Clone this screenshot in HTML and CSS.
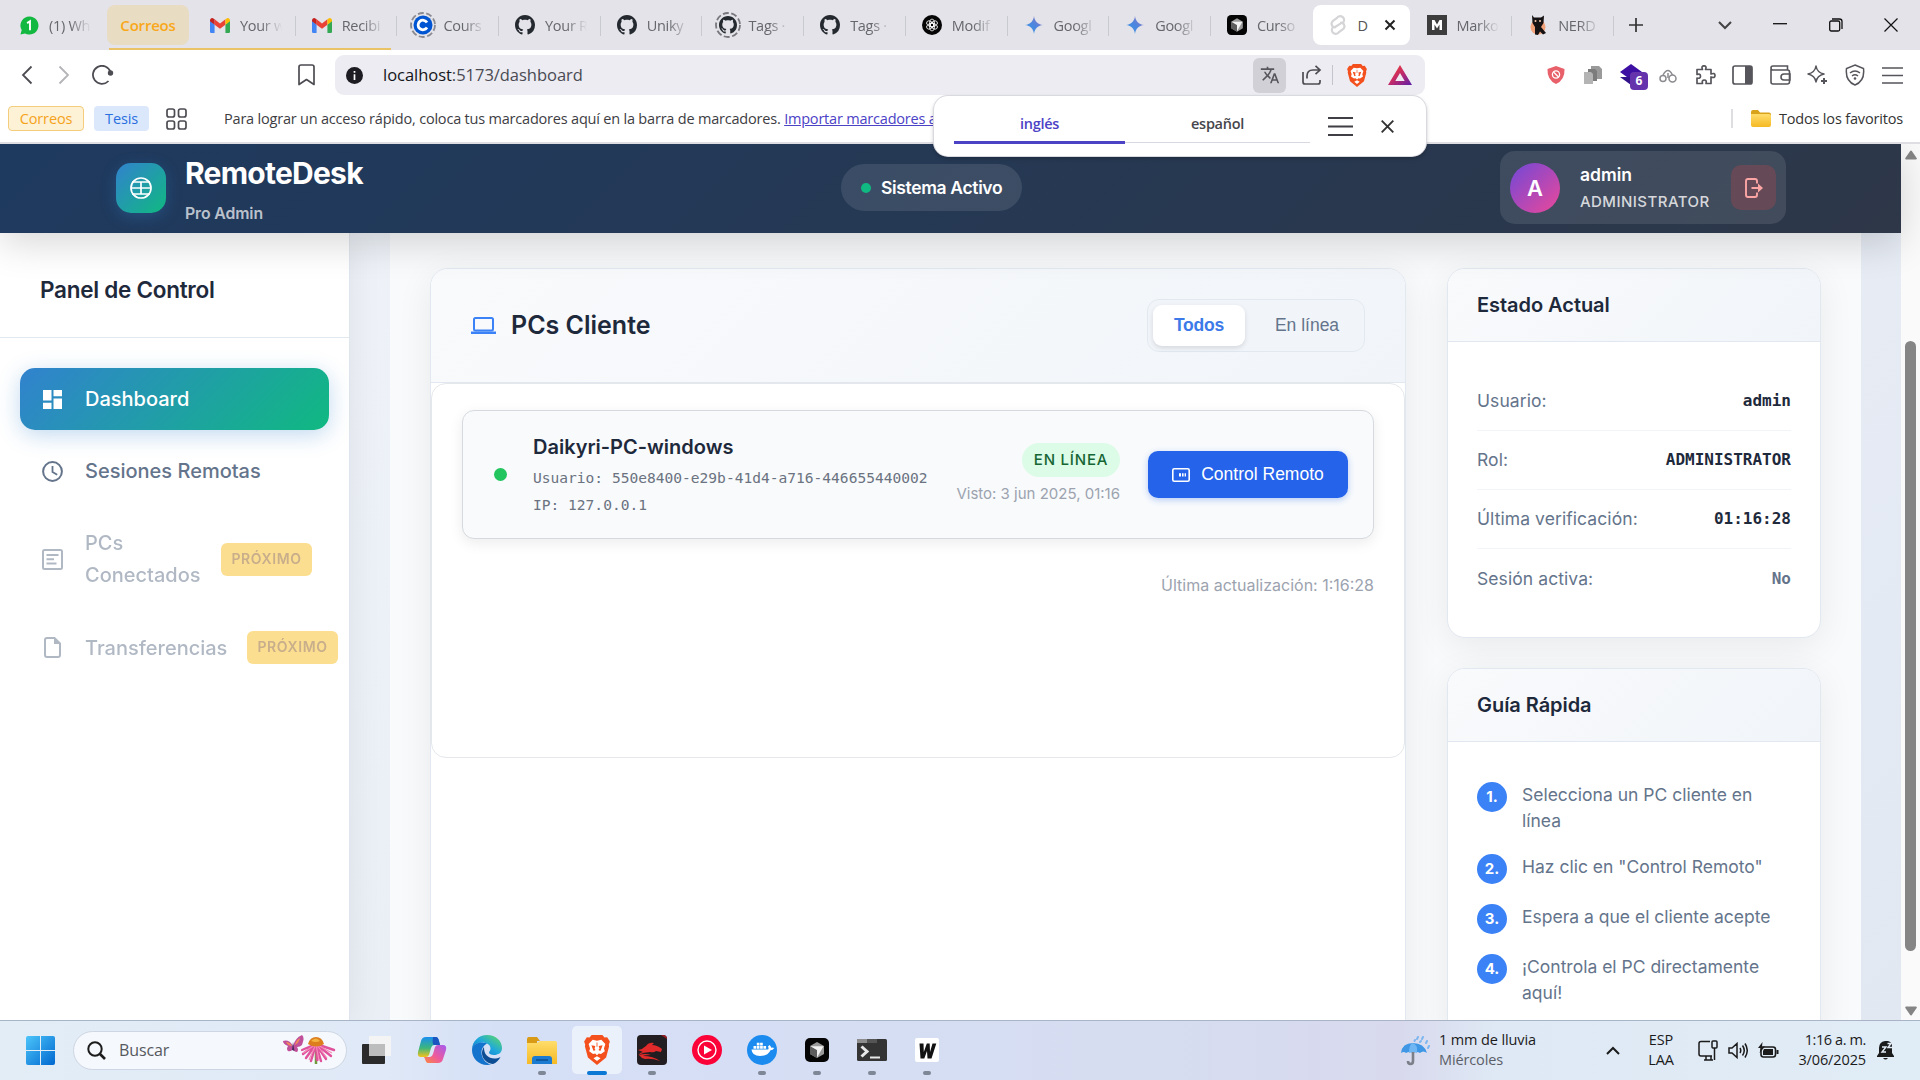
FILE: index.html
```html
<!DOCTYPE html>
<html lang="es">
<head>
<meta charset="utf-8">
<title>RemoteDesk Pro Admin</title>
<link rel="stylesheet" href="styles.css">
</head>
<body>
<svg class="defs" width="0" height="0">
  <defs>
    <linearGradient id="g-tri" x1="0" y1="0" x2="1" y2="1"><stop offset="0" stop-color="#ff4724"/><stop offset=".5" stop-color="#c22a6a"/><stop offset="1" stop-color="#5b1fa8"/></linearGradient>
    <linearGradient id="g-gem" x1="0" y1="1" x2="1" y2="0"><stop offset="0" stop-color="#3b9be0"/><stop offset=".5" stop-color="#4b86e0"/><stop offset="1" stop-color="#a273b8"/></linearGradient>
    <linearGradient id="g-win" x1="0" y1="0" x2="1" y2="1"><stop offset="0" stop-color="#4cc5fa"/><stop offset="1" stop-color="#0067cf"/></linearGradient>
    <linearGradient id="g-folder" x1="0" y1="0" x2="0" y2="1"><stop offset="0" stop-color="#ffdd6b"/><stop offset="1" stop-color="#f5b924"/></linearGradient>
    <linearGradient id="g-edge" x1="0" y1="1" x2="1" y2="0"><stop offset="0" stop-color="#0f6cc4"/><stop offset=".5" stop-color="#1fa7dd"/><stop offset="1" stop-color="#63de5b"/></linearGradient>
    <linearGradient id="g-cop1" x1="0" y1="0" x2="0" y2="1"><stop offset="0" stop-color="#1a8ff0"/><stop offset=".55" stop-color="#3cb67c"/><stop offset="1" stop-color="#f3c21b"/></linearGradient>
    <linearGradient id="g-cop2" x1="1" y1="0" x2="0" y2="1"><stop offset="0" stop-color="#a45bf0"/><stop offset=".55" stop-color="#ee5a9b"/><stop offset="1" stop-color="#fb8a3c"/></linearGradient>
    <symbol id="github" viewBox="0 0 16 16"><path fill="#24292f" d="M8 0C3.58 0 0 3.58 0 8c0 3.54 2.29 6.53 5.47 7.59.4.07.55-.17.55-.38 0-.19-.01-.82-.01-1.49-2.01.37-2.53-.49-2.69-.94-.09-.23-.48-.94-.82-1.13-.28-.15-.68-.52-.01-.53.63-.01 1.08.58 1.23.82.72 1.21 1.87.87 2.33.66.07-.52.28-.87.51-1.07-1.78-.2-3.64-.89-3.64-3.95 0-.87.31-1.59.82-2.15-.08-.2-.36-1.02.08-2.12 0 0 .67-.21 2.2.82.64-.18 1.32-.27 2-.27s1.36.09 2 .27c1.53-1.04 2.2-.82 2.2-.82.44 1.1.16 1.92.08 2.12.51.56.82 1.27.82 2.15 0 3.07-1.87 3.75-3.65 3.95.29.25.54.73.54 1.48 0 1.07-.01 1.93-.01 2.2 0 .21.15.46.55.38A8.01 8.01 0 0 0 16 8c0-4.42-3.58-8-8-8z"/></symbol>
    <symbol id="gmail" viewBox="0 0 24 18"><path fill="#4285f4" d="M0 3v13.500Q0 18 1.500 18H5.500V8z"/><path fill="#34a853" d="M24 3v13.500Q24 18 22.500 18H18.500V8z"/><path fill="#ea4335" d="M5.500 8V1.500L12 6.500 18.500 1.500V8L12 13z"/><path fill="#c5221f" d="M0 3C0 .5 2.500-.8 4.500.8L5.500 1.500V8L0 4z"/><path fill="#fbbc04" d="M24 3C24 .5 21.500-.8 19.500.8L18.500 1.500V8L24 4z"/></symbol>
    <symbol id="gem" viewBox="0 0 20 20"><path fill="url(#g-gem)" d="M10 0C10.800 6 14 9.200 20 10 14 10.800 10.800 14 10 20 9.200 14 6 10.800 0 10 6 9.200 9.200 6 10 0z"/></symbol>
    <symbol id="brave" viewBox="0 0 24 28"><path fill="#f4501e" d="M7 0h10l2 2.400 2.500-.4L24 6l-1 3 .3 1.500L20.500 21 12 28 3.500 21 .7 10.500 1 9 0 6l2.500-4 2.500.4z"/><path fill="#fff" d="M8 4.500l4 .8 4-.8 3.800 4-1.300 4 .8 2.700-3.600 2.600-2-.5-1.700 1.700-1.700-1.700-2 .5-3.600-2.600.8-2.700-1.300-4zM12 19.800l3.300 1.900L12 24.200 8.700 21.700z"/><path fill="#f4501e" d="M6.800 9.500l3.600.7-.7 2.300.9 1.500-1.700.9-1-2.300zM17.200 9.500l-3.600.7.7 2.300-.9 1.500 1.700.9 1-2.300zM11.600 7h.8v4h-.8z"/></symbol>
    <symbol id="cursor" viewBox="0 0 24 24"><rect width="24" height="24" rx="5" fill="#050505"/><path fill="#9a9a9a" d="M12 4l7 4v8l-7 4-7-4V8z"/><path fill="#5d5d5d" d="M12 12v8l-7-4V8z"/><path fill="#f2f2f2" d="M5.500 8.200h13L12 19.500V12z"/></symbol>
  </defs>
</svg>

<div class="screen">
<div class="tabstrip">
  <div class="tab tab-pinned"><svg width="19" height="19" viewBox="0 0 20 20"><path fill="#12b83f" d="M10 .5a9.500 9.500 0 1 1-4.700 17.800L.5 19.500l1.300-4.700A9.500 9.500 0 0 1 10 .5z"/><path fill="none" stroke="#fff" stroke-width="2" d="M7.500 7.500L10.500 5.500V15"/></svg><span class="tab-text">(1) Wh</span></div>
  <div class="tab-group">Correos</div>
  <div class="grouped">
    <div class="tab"><svg width="20" height="15"><use href="#gmail"/></svg><span class="tab-text">Your w</span></div>
    <div class="tab"><svg width="20" height="15"><use href="#gmail"/></svg><span class="tab-text">Recibi</span></div>
  </div>
  <div class="tab tab-ring"><svg width="26" height="26" viewBox="0 0 26 26"><circle cx="13" cy="13" r="12" fill="none" stroke="#8a8a90" stroke-width="1.800" stroke-dasharray="6 2.500"/><circle cx="13" cy="13" r="9.500" fill="#0056d2"/><path fill="none" stroke="#fff" stroke-width="2.800" d="M17 10.500a4.800 4.800 0 1 0 0 5"/></svg><span class="tab-text">Cours</span></div>
  <div class="tab"><svg width="20" height="20"><use href="#github"/></svg><span class="tab-text">Your R</span></div>
  <div class="tab"><svg width="20" height="20"><use href="#github"/></svg><span class="tab-text">Uniky</span></div>
  <div class="tab tab-ring"><svg width="26" height="26" viewBox="0 0 26 26"><circle cx="13" cy="13" r="12" fill="none" stroke="#77777d" stroke-width="1.800" stroke-dasharray="6 2.500"/><use href="#github" x="4" y="4" width="18" height="18"/></svg><span class="tab-text">Tags ·</span></div>
  <div class="tab"><svg width="20" height="20"><use href="#github"/></svg><span class="tab-text">Tags ·</span></div>
  <div class="tab"><svg width="20" height="20" viewBox="0 0 20 20"><circle cx="10" cy="10" r="10" fill="#050505"/><g fill="none" stroke="#fff" stroke-width=".8"><ellipse cx="10" cy="8" rx="2.500" ry="4"/><ellipse cx="10" cy="8" rx="2.500" ry="4" transform="rotate(60 10 10)"/><ellipse cx="10" cy="8" rx="2.500" ry="4" transform="rotate(120 10 10)"/><ellipse cx="10" cy="8" rx="2.500" ry="4" transform="rotate(180 10 10)"/><ellipse cx="10" cy="8" rx="2.500" ry="4" transform="rotate(240 10 10)"/><ellipse cx="10" cy="8" rx="2.500" ry="4" transform="rotate(300 10 10)"/></g></svg><span class="tab-text">Modif</span></div>
  <div class="tab"><svg width="20" height="18"><use href="#gem"/></svg><span class="tab-text">Googl</span></div>
  <div class="tab"><svg width="20" height="18"><use href="#gem"/></svg><span class="tab-text">Googl</span></div>
  <div class="tab tab-last"><svg width="20" height="20"><use href="#cursor"/></svg><span class="tab-text">Curso</span></div>
  <div class="tab tab-active"><svg width="18" height="20" viewBox="0 0 18 20"><path fill="none" stroke="#d5d5d8" stroke-width="2.200" stroke-linecap="round" d="M6.500 11.800l5-3.200M14.500 7a3.800 3.800 0 0 0-6.500-4L4 5.800a3.700 3.700 0 0 0 2 6.600M3.500 13a3.800 3.800 0 0 0 6.500 4l4-2.800a3.700 3.700 0 0 0-2-6.600"/></svg><span class="tab-letter">D</span><svg width="12" height="12" viewBox="0 0 12 12"><path stroke="#222" stroke-width="2" d="M1.500 1.500l9 9M10.500 1.500l-9 9"/></svg></div>
  <div class="tab"><svg width="20" height="20" viewBox="0 0 20 20"><rect width="20" height="20" fill="#3d3d3d"/><path fill="#fff" d="M5 15V5h2.500L10 9.500 12.500 5H15v10h-2.500V9.500L10 13.500 7.500 9.500V15z"/></svg><span class="tab-text">Marko</span></div>
  <div class="tab"><svg width="20" height="20" viewBox="0 0 20 20"><circle cx="10" cy="12" r="7.500" fill="#f3a27a"/><path fill="#161214" d="M4 0l2 2.500h7L16 .5 15.500 8 13 12l5 6-3 1.500-3-3-2 3.500-3-.5V12L4.500 8z"/><circle cx="7.500" cy="6" r="1" fill="#f7c9b0"/><circle cx="12" cy="6" r="1" fill="#f7c9b0"/></svg><span class="tab-text">NERD</span></div>
  <svg class="newtab" width="14" height="14" viewBox="0 0 14 14"><path stroke="#333" stroke-width="1.700" d="M7 0v14M0 7h14"/></svg>
  <div class="window-buttons">
    <svg width="14" height="9" viewBox="0 0 14 9"><path fill="none" stroke="#444" stroke-width="2" d="M1 1l6 6 6-6"/></svg>
    <svg width="14" height="14" viewBox="0 0 14 14"><path stroke="#111" stroke-width="1.300" d="M0 5.700h14"/></svg>
    <svg width="14" height="14" viewBox="0 0 14 14"><g fill="none" stroke="#111" stroke-width="1.300"><rect x=".7" y="3" width="10" height="10" rx="1.500"/><path d="M3 1h7.500q2.500 0 2.500 2.500V11"/></g></svg>
    <svg width="14" height="14" viewBox="0 0 14 14"><path stroke="#111" stroke-width="1.200" d="M.5.500l13 13M13.500.500l-13 13"/></svg>
  </div>
</div>

<div class="toolbar">
  <div class="nav-buttons">
    <svg width="12" height="20" viewBox="0 0 12 20"><path fill="none" stroke="#4c4c52" stroke-width="1.800" d="M10.500 1.500L2 10l8.500 8.500"/></svg>
    <svg width="12" height="20" viewBox="0 0 12 20"><path fill="none" stroke="#b4b4b8" stroke-width="1.800" d="M1.500 1.500L10 10l-8.500 8.500"/></svg>
    <svg width="22" height="20" viewBox="0 0 22 20"><path fill="none" stroke="#4c4c52" stroke-width="1.800" d="M16.500 16A9 9 0 1 1 18.500 7"/><circle cx="18.500" cy="8" r="2.700" fill="#4c4c52"/></svg>
  </div>
  <svg class="mark" width="17" height="22" viewBox="0 0 17 22"><path fill="none" stroke="#4c4c52" stroke-width="1.700" stroke-linejoin="round" d="M1 3q0-2 2-2h11q2 0 2 2v17.500l-7.500-5-7.500 5z"/></svg>
  <div class="urlbar">
    <svg width="17" height="17" viewBox="0 0 17 17"><circle cx="8.500" cy="8.500" r="8.500" fill="#1c1c22"/><path stroke="#fff" stroke-width="1.700" d="M8.500 7.300V13M8.500 4v1.800"/></svg>
    <span class="url"><b>localhost</b>:5173/dashboard</span>
    <div class="url-tools">
      <div class="translate"><svg width="20" height="20" viewBox="0 0 24 24"><path fill="#55555b" d="M12.870 15.070l-2.540-2.510.03-.03A17.520 17.520 0 0 0 14.070 6H17V4h-7V2H8v2H1v1.990h11.170C11.500 7.920 10.440 9.750 9 11.350 8.070 10.320 7.300 9.190 6.690 8h-2c.73 1.630 1.730 3.170 2.980 4.560l-5.090 5.020L4 19l5-5 3.110 3.110.76-2.040zM18.500 10h-2L12 22h2l1.120-3h4.750L21 22h2l-4.500-12zm-2.620 7l1.620-4.330L19.120 17h-3.240z"/></svg></div>
      <svg class="share" width="20" height="20" viewBox="0 0 20 20"><g fill="none" stroke="#4c4c52" stroke-width="1.700"><path d="M1 7v10q0 2 2 2h13q2 0 2-2v-2M5 13.500V11q0-6 6-6h7M13.500.800L18 5l-4.500 4.200"/></g></svg>
      <i class="url-sep"></i>
      <svg class="b1" width="20" height="23"><use href="#brave"/></svg>
      <svg width="24" height="20" viewBox="0 0 24 20"><path fill="url(#g-tri)" fill-rule="evenodd" d="M12 0l12 20H0zM12 8l-4.700 8h9.400z"/></svg>
    </div>
  </div>
  <div class="extensions">
    <div class="ext"><svg width="18" height="18" viewBox="0 0 18 18"><path fill="#e8616a" d="M9 0l8.500 3q.5 11-8.500 15Q0 14 .5 3z"/><circle cx="9" cy="8.500" r="3.600" fill="none" stroke="#fff" stroke-width="1.300"/><path stroke="#fff" stroke-width="1.300" d="M6.500 6l5 5"/></svg></div>
    <div class="ext"><svg width="18" height="18" viewBox="0 0 18 18"><path fill="#9a9a9a" d="M7 0h8l3 3v10H7z"/><path fill="#7c7c7c" d="M4 3h7l2 2v10H4z"/><path fill="#b4b4b4" d="M0 6h7l2 2v10H0z"/></svg></div>
    <div class="ext ext-badged"><svg width="22" height="22" viewBox="0 0 22 22"><path fill="#3d0fa3" d="M11 0l11 8-11 8L0 8z"/><path fill="#31108a" d="M0 13l11 8 5-4-3-4z"/></svg><span>6</span></div>
    <div class="ext"><svg width="18" height="15" viewBox="0 0 18 15"><g fill="none" stroke="#8b8b90" stroke-width="1.500"><circle cx="4" cy="10.500" r="3"/><circle cx="13.500" cy="10.500" r="3.500"/><path d="M4 7q5-9 9.500 0M9 5v5"/></g></svg></div>
    <div class="ext"><svg width="21" height="20" viewBox="0 0 21 20"><path fill="none" stroke="#55555b" stroke-width="1.700" stroke-linejoin="round" d="M2 4.500h5.500q-1.500-3.700 1.500-3.700t1.500 3.700H16V9q4-1.500 4 1.500T16 12v6.500h-5q1-3.500-1.700-3.500T7.500 18.500H2V13q3.500 1 3.500-1.800T2 9.500z"/></svg></div>
    <div class="ext"><svg width="21" height="20" viewBox="0 0 21 20"><rect x="1" y="1" width="19" height="18" rx="2" fill="none" stroke="#55555b" stroke-width="1.700"/><path fill="#55555b" d="M13 1h7v18h-7z"/></svg></div>
    <div class="ext"><svg width="21" height="20" viewBox="0 0 21 20"><g fill="none" stroke="#55555b" stroke-width="1.600"><path d="M1 4v13q0 2 2 2h14q2.500 0 2.500-2V7q0-2-2-2H3Q1 5 1 3t2-2h14.500v4M20 9h-6q-3 0-3 3t3 3h6z"/></g></svg></div>
    <div class="ext"><svg width="21" height="20" viewBox="0 0 21 20"><g fill="none" stroke="#55555b" stroke-width="1.500" stroke-linejoin="round"><path d="M9 1q1 6.500 8 8-7 1.500-8 8-1-6.500-8-8 7-1.500 8-8z"/><path d="M17 13v6M14 16h6" stroke-width="2"/></g></svg></div>
    <div class="ext"><svg width="20" height="22" viewBox="0 0 20 22"><g fill="none" stroke="#55555b" stroke-width="1.500"><path d="M10 1l8.500 3.500Q20 17 10 21 0 17 1.500 4.500z"/><path d="M5 9q5-4 10 0M7 12q3-2.400 6 0"/></g><circle cx="10" cy="14.500" r="1.300" fill="#55555b"/></svg></div>
    <div class="ext"><svg width="21" height="17" viewBox="0 0 21 17"><path stroke="#55555b" stroke-width="1.700" d="M0 1h21M0 8.500h21M0 16h21"/></svg></div>
  </div>
</div>

<div class="bookmarks">
  <span class="chip chip-y">Correos</span>
  <span class="chip chip-b">Tesis</span>
  <svg class="apps" width="21" height="22" viewBox="0 0 21 22"><g fill="none" stroke="#4c4c52" stroke-width="1.700"><rect x="1" y="1" width="7.500" height="8" rx="2"/><rect x="12.500" y="1" width="7.500" height="8" rx="2"/><rect x="1" y="13" width="7.500" height="8" rx="2"/><rect x="12.500" y="13" width="7.500" height="8" rx="2"/></g></svg>
  <span class="bm-text">Para lograr un acceso rápido, coloca tus marcadores aquí en la barra de marcadores. <a>Importar marcadores ahora</a></span>
  <span class="favs"><svg width="20" height="17" viewBox="0 0 20 17"><path fill="#d9a21b" d="M0 2q0-2 2-2h5l2 2.500h9q2 0 2 2V6H0z"/><path fill="url(#g-folder)" d="M0 4h18q2 0 2 2v9q0 2-2 2H2q-2 0-2-2z"/></svg>Todos los favoritos</span>
  <div class="translate-pop">
    <div class="lang lang-on">inglés</div>
    <div class="lang">español</div>
    <svg class="pop-menu" width="25" height="19" viewBox="0 0 25 19"><path stroke="#3f3f45" stroke-width="2" d="M0 1h25M0 9.500h25M0 18h25"/></svg>
    <svg width="13" height="13" viewBox="0 0 13 13"><path stroke="#333" stroke-width="1.900" d="M.7.700l11.600 11.600M12.300.700L.7 12.300"/></svg>
  </div>
</div>

<div class="viewport">
  <div class="app">
    <header class="header">
      <div class="brand">
        <div class="logo"><svg width="22" height="22" viewBox="0 0 22 22"><g fill="none" stroke="#fff" stroke-width="1.700"><circle cx="11" cy="11" r="10"/><path d="M2 5h18M1 11h20M2 17h18M11 5v12"/></g></svg></div>
        <div class="brand-text"><h1>RemoteDesk</h1><p>Pro Admin</p></div>
      </div>
      <div class="status"><i></i>Sistema Activo</div>
      <div class="user">
        <div class="avatar">A</div>
        <div class="user-text"><b>admin</b><span>ADMINISTRATOR</span></div>
        <div class="logout"><svg width="18" height="20" viewBox="0 0 18 20"><path fill="none" stroke="#fca5a5" stroke-width="1.900" d="M12 5.500V3q0-2-2-2H3Q1 1 1 3v14q0 2 2 2h7q2 0 2-2v-2.500"/><path fill="#fca5a5" d="M6.500 9H13V5.500l5 4.500-5 4.500V11H6.500z"/></svg></div>
      </div>
    </header>
    <div class="body">
      <aside class="sidebar">
        <h3>Panel de Control</h3>
        <nav>
          <div class="item item-on"><svg width="19" height="19" viewBox="0 0 19 19"><path fill="#fff" d="M0 0h8.500v10.500H0zM10.500 0H19v6.300h-8.500zM10.500 8.500H19V19h-8.500zM0 12.700h8.500V19H0z"/></svg><span>Dashboard</span></div>
          <div class="item"><svg width="21" height="21" viewBox="0 0 21 21"><circle cx="10.500" cy="10.500" r="9.400" fill="none" stroke="#64748b" stroke-width="2"/><path fill="none" stroke="#64748b" stroke-width="1.800" d="M10.500 5v6l4.700 2.800"/></svg><span>Sesiones Remotas</span></div>
          <div class="item item-off"><svg width="21" height="21" viewBox="0 0 21 21"><g fill="none" stroke="#64748b" stroke-width="2"><rect x="1" y="1" width="19" height="19" rx="1.500"/><path d="M4.500 6h12M4.500 10.300h7.500M4.500 14.600h10"/></g></svg><span>PCs Conectados</span><em>PRÓXIMO</em></div>
          <div class="item item-off"><svg width="21" height="21" viewBox="0 0 21 21"><path fill="none" stroke="#64748b" stroke-width="2" d="M3 3q0-2 2-2h7.500L18 6.500V18q0 2-2 2H5q-2 0-2-2z"/><path fill="#64748b" d="M12 1v6h6z"/></svg><span>Transferencias</span><em>PRÓXIMO</em></div>
        </nav>
      </aside>
      <main class="main">
        <section class="card pcs">
          <div class="pcs-head">
            <svg width="25" height="17" viewBox="0 0 25 17"><rect x="3" y="1" width="19" height="12.500" rx="1.500" fill="none" stroke="#3b82f6" stroke-width="2"/><path fill="#3b82f6" d="M0 14.500h25V17H0z"/></svg>
            <h2>PCs Cliente</h2>
            <div class="toggle"><button class="on">Todos</button><button>En línea</button></div>
          </div>
          <div class="list">
            <div class="client">
              <i class="dot"></i>
              <div class="client-info"><h4>Daikyri-PC-windows</h4><code>Usuario: 550e8400-e29b-41d4-a716-446655440002</code><code>IP: 127.0.0.1</code></div>
              <div class="client-state"><span class="online">EN LÍNEA</span><span class="seen">Visto: 3 jun 2025, 01:16</span></div>
              <button class="control"><svg width="18" height="14" viewBox="0 0 18 14"><rect x=".8" y=".8" width="16.400" height="12.400" rx="1.500" fill="none" stroke="#fff" stroke-width="1.600"/><path fill="#fff" d="M7 5.300h2v3.200H7zM10 5.300h1.600v3.200H10zM12.600 5.300H14v3.200h-1.400z"/></svg>Control Remoto</button>
            </div>
            <p class="updated">Última actualización: 1:16:28</p>
          </div>
        </section>
        <div class="side">
          <section class="card">
            <h3>Estado Actual</h3>
            <dl>
              <div><dt>Usuario:</dt><dd>admin</dd></div>
              <div><dt>Rol:</dt><dd>ADMINISTRATOR</dd></div>
              <div><dt>Última verificación:</dt><dd>01:16:28</dd></div>
              <div><dt>Sesión activa:</dt><dd class="muted">No</dd></div>
            </dl>
          </section>
          <section class="card">
            <h3>Guía Rápida</h3>
            <div class="steps">
              <div><b>1.</b><span>Selecciona un PC cliente en línea</span></div>
              <div><b>2.</b><span>Haz clic en "Control Remoto"</span></div>
              <div><b>3.</b><span>Espera a que el cliente acepte</span></div>
              <div><b>4.</b><span>¡Controla el PC directamente aquí!</span></div>
            </div>
          </section>
        </div>
      </main>
    </div>
  </div>
  <div class="scrollbar">
    <svg width="12" height="10" viewBox="0 0 12 10"><path fill="#858585" stroke="#858585" stroke-linejoin="round" stroke-width="2" d="M6 1.500L10.800 8.500H1.200z"/></svg>
    <i></i>
    <svg width="12" height="10" viewBox="0 0 12 10"><path fill="#858585" stroke="#858585" stroke-linejoin="round" stroke-width="2" d="M6 8.500L10.800 1.500H1.200z"/></svg>
  </div>
</div>

<div class="taskbar">
  <svg class="start" width="29" height="29" viewBox="0 0 29 29"><path fill="url(#g-win)" d="M2 0h12v14H0V2q0-2 2-2zM15 0h12q2 0 2 2v12H15zM0 15h14v14H2q-2 0-2-2zM15 15h14v12q0 2-2 2H15z"/></svg>
  <div class="search">
    <svg width="19" height="19" viewBox="0 0 19 19"><circle cx="8" cy="8" r="6.700" fill="none" stroke="#1c1c1c" stroke-width="2"/><path stroke="#1c1c1c" stroke-width="2.600" d="M12.500 12.500L18 18"/></svg>
    <span>Buscar</span>
    <svg class="flower" width="54" height="32" viewBox="0 0 54 32"><path fill="#c0509a" d="M1 7q6-2 10 5 2-8 9-11 3 2 0 10-2 2-5 2 2 3 0 5-3 0-4-3-2 3-5 2Q4 15 6 12 1 10 1 7z"/><path fill="#f08a5c" d="M4 8q4 0 6 4-4 0-6-4zM18 4q-4 2-5 7 4-2 5-7z"/><path fill="#4b2a63" d="M11 8l1.500 9-2.500-1z"/><path stroke="#6f9a3c" stroke-width="2.500" d="M34 15v15"/><g stroke="#e0529b" stroke-width="2.400" stroke-linecap="round"><path d="M34 10l-14 6M34 10l-13 10M34 10l-10 14M34 10l-5 17M34 10l1 16M34 10l5 17M34 10l10 15M34 10l15 12M34 10l18 6"/></g><path stroke="#f58bb8" stroke-width="1.200" d="M34 10l-13 9M34 10l-7 16M34 10l3 17M34 10l11 14M34 10l16 9"/><path fill="#dc7d1e" d="M26 10q2-7 8-7t8 7q-8 5-16 0z"/><path fill="#f3b33e" d="M29 7q5-5 9 0-4 2-9 0z"/></svg>
  </div>
  <div class="apps-row">
    <div class="app-ic"><svg width="30" height="30" viewBox="0 0 30 30"><rect x="0" y="9" width="23" height="20" rx="1" fill="#2b2b2b"/><rect x="7" y="1" width="22" height="20" rx="1" fill="#f4f4f4" fill-opacity=".95"/><path fill="#bdbdbd" d="M7 9h16v12H7z"/></svg></div>
    <div class="app-ic"><svg width="30" height="30" viewBox="0 0 30 30"><path fill="url(#g-cop1)" d="M9 2h10q2 0 3 4l1 4h-6q-2 0-3 3l-2 7q-1 2-3 2H4q-4 0-3-5L4 6q1-4 5-4z"/><path fill="#1b55c0" d="M16 2h3q2 0 3 4l1 4h-6q-2 0-1-8z"/><path fill="url(#g-cop2)" d="M21 28H11q-2 0-3-4l-1-2h6q2 0 3-3l2-7q1-2 3-2h5q4 0 3 5l-3 9q-1 4-5 4z"/></svg></div>
    <div class="app-ic"><svg width="30" height="30" viewBox="0 0 30 30"><path fill="url(#g-edge)" d="M15 0c9 0 15 6 15 13 0 5-4 7-8 7-3 0-5-1-5-2.500 0-1 1.500-1.500 1.500-4C18.500 10 15 7.500 10 7.500S0 11 0 15C0 6 7 0 15 0z"/><path fill="#1473cc" d="M0 15c0-5 5-7.500 10-7.500 3 0 5 1 5 1-3 1.500-5.500 5-5.500 9 0 7 6 12 10 12C8 32 0 24 0 15z"/><path fill="#0c4d94" d="M12 12c-5 7 0 16 9 17 3-1 6-4 7.500-7-8 4-17 0-16.500-10z"/></svg></div>
    <div class="app-ic run"><svg width="30" height="27" viewBox="0 0 30 27"><path fill="#d99a16" d="M0 2q0-2 2-2h8l3 4h-3v4H0z"/><path fill="url(#g-folder)" d="M0 6h10l3-2h15q2 0 2 2v21H0z"/><path fill="#1a7bd0" d="M5 27v-5q0-3 3-3h14q3 0 3 3v5z"/><path stroke="#0b4f93" stroke-width="1.500" d="M9 23h12"/></svg></div>
    <div class="app-ic run current"><svg width="26" height="30"><use href="#brave"/></svg></div>
    <div class="app-ic run"><svg width="30" height="30" viewBox="0 0 30 30"><rect width="30" height="30" rx="4" fill="#211d20"/><path fill="#e22a2a" d="M1 15q5-1 8-4 3-4 8-3l-2 2q5 0 10 4l-1 3-5-1q-2 2-6 1-6 0-12 3 3-3 5-3zM2 20q6-2 12 0-6 0-8 1 10 0 17 5-8-3-15-2-4-1-6-4z"/><path fill="#9a1c22" d="M24 0h2q4 0 4 4z"/></svg></div>
    <div class="app-ic"><svg width="30" height="30" viewBox="0 0 30 30"><circle cx="15" cy="15" r="15" fill="#fb0239"/><circle cx="15" cy="15" r="9" fill="none" stroke="#fff" stroke-width="1.400"/><path fill="#fff" d="M12 10.500l8 4.500-8 4.500z"/></svg></div>
    <div class="app-ic run"><svg width="30" height="30" viewBox="0 0 30 30"><circle cx="15" cy="15" r="15" fill="#1c8bef"/><path fill="#fff" d="M4.500 14.500h16.700q.8-1-.2-3l1.500-1.500q1.500 1.200 1.700 2.700 1.500-.3 3 .3-1.200 2.200-3.700 2.200Q21 21 13 21q-8 0-8.500-6.500zM6.500 11h2.700v2.700H6.500zM9.800 11h2.700v2.700H9.800zM13.100 11h2.700v2.700h-2.700zM16.400 11h2.700v2.700h-2.700zM9.800 7.800h2.700v2.700H9.800zM13.100 7.800h2.700v2.700h-2.700z"/></svg></div>
    <div class="app-ic run"><svg width="24" height="24"><use href="#cursor"/></svg></div>
    <div class="app-ic run"><svg width="30" height="22" viewBox="0 0 30 22"><rect width="30" height="22" rx="1.500" fill="#343434"/><path fill="#8d8d8d" d="M0 0h20v4H0z"/><path fill="#555" d="M10 0h10v4H10z"/><path fill="none" stroke="#e8e8e8" stroke-width="3" d="M4.500 7.500L10 12.500l-5.500 5"/><path stroke="#e8e8e8" stroke-width="2" d="M13 18.500h10"/></svg></div>
    <div class="app-ic run"><svg width="24" height="24" viewBox="0 0 24 24"><rect width="24" height="24" rx="2" fill="#fff"/><path fill="#111" d="M4.500 5.500h4L8.800 14l3-8.500h2.900L15 14l2.500-8.500h3.800L16.500 20.500h-4L12 13l-2.700 7.500H5.500z"/></svg></div>
  </div>
  <div class="weather">
    <svg width="30" height="31" viewBox="0 0 30 31"><path stroke="#7db6ef" stroke-width="2" stroke-linecap="round" d="M17 2l-1 2M22 2l-1 2M26 6l-1 2M20 6l-1 1M28 11l-1 2M14 5l-.5 1"/><path fill="#3f97e6" d="M0 18Q1 8 12 8t14 10q-4-3-7 0-3-2-7 0-4-2-7 0-2-2-5 0z"/><path fill="#6fb6f2" d="M8 18Q8 9 12 8q5 2 4 10-4-2-8 0z"/><path fill="none" stroke="#7a7f88" stroke-width="2.600" d="M12 17v9q0 3-2.500 3T7 26"/></svg>
    <div><span>1 mm de lluvia</span><span class="dim">Miércoles</span></div>
  </div>
  <svg class="up" width="14" height="9" viewBox="0 0 14 9"><path fill="none" stroke="#1b1b1b" stroke-width="2" d="M1 8l6-6 6 6"/></svg>
  <div class="kbd"><span>ESP</span><span>LAA</span></div>
  <div class="tray">
    <svg width="20" height="21" viewBox="0 0 20 21"><g fill="none" stroke="#1b1b1b" stroke-width="1.500"><path d="M12 1.500H3q-2 0-2 2V14q0 2 2 2h11M6 20h9M8 16v4M13 16v4"/><rect x="14" y="1" width="5" height="7" rx="1"/><path d="M16.500 8v12"/></g></svg>
    <svg width="20" height="17" viewBox="0 0 20 17"><g fill="none" stroke="#1b1b1b" stroke-width="1.500"><path d="M1 6h3l5-4.500v14L4 11H1zM12 6q1.500 2.500 0 5M14.500 3.500q3.500 5 0 10M17 1.500q4.500 7 0 14"/></g></svg>
    <svg width="21" height="17" viewBox="0 0 21 17"><rect x="3" y="5" width="14.500" height="10" rx="2.500" fill="none" stroke="#1b1b1b" stroke-width="1.600"/><path fill="#1b1b1b" d="M6 7h9v6H5V9zM18.500 8h2v4h-2zM4.500 0L0 6h3l-1.500 5L7 4.500H4z"/></svg>
  </div>
  <div class="clock"><span class="hour">1:16 a. m.</span><span>3/06/2025</span></div>
  <svg width="18" height="20" viewBox="0 0 18 20"><path fill="#1b1b1b" d="M2 13V8q0-6 6-7h3q4 1 4 5v7l2 3v1H0v-1zM6 18h5q-2.500 3-5 0z"/><path fill="none" stroke="#e4edf6" stroke-width="1.400" d="M5 7h4l-4 5h4M10.500 3.500H14l-3 4h4"/></svg>
</div>
</div>
</body>
</html>
```
FILE: styles.css
```css
* { box-sizing: border-box; margin: 0; padding: 0; }
body { width: 1920px; height: 1080px; overflow: hidden; font-family: Inter, sans-serif; color: #1e293b; }
svg { display: block; flex: none; }
.defs { position: absolute; }
button { border: 0; background: none; font-family: "Liberation Sans", sans-serif; }
.screen { display: flex; flex-direction: column; width: 1920px; height: 1080px; }
.tabstrip, .toolbar, .bookmarks, .taskbar { font-family: "Open Sans", "Noto Sans", sans-serif; display: flex; align-items: center; flex: none; white-space: nowrap; }

/* Tab strip */
.tabstrip { height: 50px; background: #e3e3e9; }
.tab { position: relative; flex: none; width: 101.7px; height: 50px; padding-left: 16px; display: flex; align-items: center; gap: 10px; }
.tab::after { content: ""; width: 1px; height: 20px; background: #c9c9d0; position: absolute; right: 0; top: 16px; }
.tab-pinned::after, .tab-last::after, .tab-active::after { display: none; }
.tab-pinned { width: 107px; padding-left: 20px; }
.tab-ring { padding-left: 13px; gap: 7px; }
.tab-text { width: 46px; font-size: 14.5px; letter-spacing: -.3px; color: #66666d; -webkit-mask-image: linear-gradient(90deg, #000 45%, transparent 92%); mask-image: linear-gradient(90deg, #000 45%, transparent 92%); }
.tab-group { flex: none; width: 82px; height: 40px; margin-right: 5px; border-radius: 8px; background: #e8dcc3; color: #f9a81a; font-size: 15px; font-weight: 600; letter-spacing: -.2px; display: flex; align-items: center; justify-content: center; }
.grouped { display: flex; flex: none; position: relative; }
.grouped::after { content: ""; position: absolute; left: -85px; right: 6px; bottom: 0; height: 2px; background: #eac367; }
.tab-active { width: 97px; height: 40px; margin-right: 1px; background: #fff; border-radius: 8px; gap: 11px; }
.tab-letter { font-size: 14.5px; width: 12px; margin-right: 3px; color: #555; }
.newtab { margin-left: 15px; }
.window-buttons { margin-left: auto; display: flex; align-items: center; padding-right: 22px; gap: 41.500px; }

/* Address row */
.toolbar { height: 45px; background: #fff; padding-top: 5px; }
.nav-buttons { display: flex; align-items: center; padding-left: 21px; gap: 25px; width: 298px; }
.nav-buttons svg:last-child { margin-left: -3px; }
.mark { margin-right: 20px; }
.urlbar { width: 1090px; height: 40px; border-radius: 9px; background: #ececf2; display: flex; align-items: center; padding-left: 11px; }
.url { margin: -2px 0 0 20px; font-size: 16.5px; letter-spacing: -.03px; color: #4a4a52; }
.url b { font-weight: 400; color: #15151a; }
.url-tools { margin-left: auto; display: flex; align-items: center; padding-right: 13px; }
.translate { width: 33px; height: 35px; border-radius: 6px; background: #d0d0d6; display: flex; align-items: center; justify-content: center; }
.share { margin-left: 16px; }
.url-sep { width: 1px; height: 20px; background: #c4c4cc; margin: 0 14px 0 10px; }
.b1 { margin-right: 21px; }
.extensions { margin-left: auto; padding-right: 9px; display: flex; }
.ext { width: 37.4px; display: flex; justify-content: center; align-items: center; }
.ext-badged { position: relative; }
.ext-badged span { position: absolute; left: 18px; top: 8px; width: 18px; height: 18px; border-radius: 4px; background: #6534ac; color: #fff; font-size: 12px; font-weight: 700; line-height: 18px; text-align: center; }

/* Bookmarks row */
.bookmarks { position: relative; z-index: 5; height: 49px; background: #fff; border-bottom: 2px solid #dfdfe3; padding: 0 17px 0 8px; font-size: 14.5px; }
.chip { flex: none; height: 25px; border-radius: 4px; font-size: 14.500px; letter-spacing: -.15px; font-weight: 500; display: flex; align-items: center; justify-content: center; }
.chip-y { width: 76px; border: 1px solid #f3cd7b; background: #fdf1d6; color: #f5a31a; }
.chip-b { width: 55px; margin-left: 10px; background: #dbe8fb; color: #2a6fe0; }
.apps { margin-left: 17px; }
.bm-text { margin-left: 37px; color: #3d3d43; letter-spacing: -.2px; }
.bm-text a { color: #4c42c6; text-decoration: underline; }
.favs { margin-left: auto; height: 19px; border-left: 2px solid #dedee2; padding-left: 18px; display: flex; align-items: center; gap: 8px; letter-spacing: -.17px; color: #333; }
.translate-pop { position: absolute; left: 934px; top: 1px; width: 492px; height: 60px; border-radius: 14px; background: #fff; box-shadow: 0 0 0 1px #d9d9e0, 0 2px 4px rgba(0,0,0,.3); padding: 0 31px 0 20px; display: flex; align-items: center; }
.lang { width: 185px; height: 31px; margin-top: 3px; border-bottom: 1px solid #d8d8e0; padding-top: 2px; text-align: center; font-weight: 600; font-size: 14.5px; letter-spacing: -.3px; color: #45454b; }
.lang-on { width: 171px; border-bottom: 3px solid #4c42c6; color: #4c42c6; margin-top: 5px; padding-top: 1px; }
.pop-menu { margin: 0 28px 0 18px; }

/* Application */
.viewport { flex: 1; height: 876px; display: flex; background: #fff; overflow: hidden; }
.app { width: 1901px; display: flex; flex-direction: column; }
.header { position: relative; z-index: 2; flex: none; height: 89px; padding: 0 115px 2px 116px; display: flex; align-items: center; justify-content: space-between; background: linear-gradient(135deg, #1e3a5f, #2d3748); box-shadow: 0 10px 38px rgba(0,0,0,.16); color: #fff; }
.brand { display: flex; align-items: center; gap: 20px; width: 285px; }
.logo { width: 50px; height: 50px; border-radius: 15px; display: flex; align-items: center; justify-content: center; background: linear-gradient(135deg, #3182ce, #10b981); box-shadow: 0 4px 15px rgba(49,130,206,.3); }
.brand-text h1 { font-size: 30px; line-height: 48px; font-weight: 700; letter-spacing: -.75px; }
.brand-text p { font-size: 15.800px; line-height: 26px; margin-top: 4px; font-weight: 600; color: rgba(255,255,255,.7); letter-spacing: -.1px; }
.brand-text { margin-left: -1px; }
.status { width: 181px; height: 47px; margin-right: 38px; border-radius: 24px; padding-left: 20px; background: rgba(255,255,255,.1); display: flex; align-items: center; gap: 10px; font-size: 17.5px; font-weight: 600; letter-spacing: -.35px; white-space: nowrap; }
.status i { width: 10px; height: 10px; border-radius: 50%; background: #10b981; }
.user { width: 286px; height: 73px; border-radius: 15px; padding: 0 10px; background: rgba(255,255,255,.1); display: flex; align-items: center; }
.avatar { width: 50px; height: 50px; border-radius: 50%; background: linear-gradient(135deg, #7048d8, #ec4899); display: flex; align-items: center; justify-content: center; font-size: 22px; font-weight: 600; }
.user-text { margin-left: 20px; display: flex; flex-direction: column; }
.user-text b { font-size: 17.5px; line-height: 27px; font-weight: 600; }
.user-text span { font-size: 15px; line-height: 26px; letter-spacing: .6px; color: rgba(255,255,255,.8); font-weight: 500; letter-spacing: .45px; padding-top: 1px; }
.logout { margin-left: auto; width: 45px; height: 45px; border-radius: 10px; background: rgba(239,68,68,.22); display: flex; align-items: center; justify-content: center; }
.body { flex: 1; display: flex; min-height: 0; background: linear-gradient(135deg, #f0f4f9, #e2e8f2); }
.sidebar { width: 350px; background: #fff; border-right: 1px solid #dfe5ec; box-shadow: 4px 0 30px rgba(0,0,0,.06); }
.sidebar h3 { height: 105px; padding-left: 40px; border-bottom: 1px solid #e2e8f0; font-size: 22.5px; line-height: 113px; font-weight: 600; letter-spacing: -.27px; }
.sidebar nav { padding: 30px 20px; display: flex; flex-direction: column; gap: 10px; }
.item { width: 309px; min-height: 62px; padding: 15px 0 15px 22px; border-radius: 15px; display: flex; align-items: center; font-size: 20px; line-height: 32px; font-weight: 500; color: #64748b; }
.item svg:first-child { margin-right: 22px; }
.item-on { background: linear-gradient(135deg, #3182ce, #10b981); color: #fff; box-shadow: 0 5px 22px rgba(49,130,206,.3); }
.item-on svg:first-child { margin: 0 23px 0 1px; }
.item-off { opacity: .5; }
.item span { flex: none; }
.item-off span { width: 116px; }
.item-off:last-child span { width: 142px; }
.item em { flex: none; margin-left: 20px; width: 91px; height: 33px; border-radius: 6px; background: #fbbf24; color: #92601a; font-style: normal; font-size: 14px; font-weight: 600; letter-spacing: .6px; line-height: 32px; text-align: center; }
.main { flex: 1; margin: 0 40px; padding: 35px 40px 0; background: #f8fafc; display: flex; align-items: flex-start; gap: 41px; overflow: hidden; }
.card { background: #fff; border: 1px solid #e2e8f0; border-radius: 18px; box-shadow: 0 8px 36px rgba(0,0,0,.07); overflow: hidden; }
.pcs { width: 976px; height: 900px; flex: none; }
.pcs-head { height: 114px; padding: 0 40px; border-bottom: 1px solid #e2e8f0; background: linear-gradient(135deg, #f9fafc, #f1f5f9); display: flex; align-items: center; }
.pcs-head h2 { margin-left: 15px; font-size: 25px; line-height: 30px; margin-top: -1px; font-weight: 600; }
.toggle { margin-left: auto; width: 218px; height: 53px; padding: 5px; border: 1px solid #e2e8f0; border-radius: 12px; display: flex; background: #f1f5f9; }
.toggle button { flex: 1; padding-left: 10px; font-size: 17.5px; color: #64748b; border-radius: 9px; }
.toggle .on { flex: none; padding: 0; width: 92px; background: #fff; color: #3b7ae8; font-weight: 700; letter-spacing: -.2px; box-shadow: 0 2px 5px rgba(0,0,0,.12); }
.list { height: 375px; border: 1px solid #e5e7eb; border-radius: 15px; padding: 26px 30px; }
.client { height: 129px; border: 1px solid #d6dade; border-radius: 12px; background: #f8fafc; box-shadow: 0 4px 14px rgba(0,0,0,.08); display: flex; align-items: center; padding: 0 25px 0 31px; }
.dot { width: 13px; height: 13px; border-radius: 50%; background: #22c55e; }
.client-info { margin-left: 26px; display: flex; flex-direction: column; }
.client-info h4 { font-size: 20px; line-height: 32px; font-weight: 600; margin-bottom: 1px; }
.client-info code { font: 14.57px/27px "DejaVu Sans Mono", monospace; color: #6b7280; }
.client-state { margin-left: auto; display: flex; flex-direction: column; align-items: flex-end; }
.online { width: 98px; height: 34px; border-radius: 17px; background: #dcfce7; color: #166534; font-size: 15px; font-weight: 500; letter-spacing: .8px; line-height: 33px; text-align: center; }
.seen { font-size: 15px; line-height: 24px; margin-top: 5px; color: #9ca3af; }
.control { margin-left: 28px; width: 200px; height: 47px; border-radius: 10px; background: #2563eb; color: #fff; font-size: 17.5px; display: flex; align-items: center; justify-content: center; gap: 11px; box-shadow: 0 2px 6px rgba(37,99,235,.3); }
.updated { margin-top: 33px; text-align: right; font-size: 16px; line-height: 26px; color: #9ca3af; }
.side { width: 374px; flex: none; display: flex; flex-direction: column; gap: 30px; }
.side h3 { height: 73px; padding-left: 29px; border-bottom: 1px solid #e2e8f0; background: linear-gradient(135deg, #f9fafc, #f1f5f9); font-size: 20px; line-height: 73px; font-weight: 600; letter-spacing: -.05px; }
.side dl { padding: 30px 29px 29px 29px; }
.side dl div { height: 59px; border-bottom: 1px solid #f1f5f9; padding-bottom: 1px; display: flex; align-items: center; justify-content: space-between; }
.side dl div:last-child { border: 0; }
.side dt { font-size: 17.5px; letter-spacing: .08px; color: #64748b; }
.side dd { font: bold 16px "DejaVu Sans Mono", monospace; }
.side .muted { color: #64748b; }
.steps { padding: 40px 29px 40px; display: flex; flex-direction: column; gap: 20px; }
.steps div { display: flex; gap: 15px; align-items: flex-start; min-height: 30px; }
.steps b { flex: none; width: 30px; height: 30px; border-radius: 50%; background: #3b82f6; color: #fff; font-size: 15px; line-height: 30px; text-align: center; }
.steps span { width: 265px; font-size: 17.5px; line-height: 26px; color: #64748b; }
.scrollbar { width: 19px; background: #fafafb; display: flex; flex-direction: column; align-items: center; padding: 6px 0 4px; }
.scrollbar i { width: 11px; height: 610px; border-radius: 6px; background: #858585; margin: 181px 0 auto; }

/* Taskbar */
.taskbar { height: 60px; border-top: 1px solid #a9b4c6; background: linear-gradient(90deg, #e3edf6, #dfe9f7 20%, #d5dff6 26%, #d6ddf1 60%, #d8d9ed 73%, #dfe9f5 78%, #e0ecf6); padding: 0 25px 1px 26px; color: #1b1b1b; }
.search { width: 274px; height: 39px; margin-left: 18px; border: 1px solid #cdd6e2; border-radius: 20px; background: #f5f8fd; display: flex; align-items: center; padding: 0 10px 0 13px; }
.search span { margin-left: 13px; font-size: 16px; letter-spacing: -.1px; color: #55585e; }
.flower { margin-left: auto; }
.apps-row { display: flex; margin-left: 5px; }
.app-ic { position: relative; width: 50px; height: 48px; margin-right: 5px; border-radius: 5px; display: flex; align-items: center; justify-content: center; }
.current { background: #ebf1fb; }
.run::after { content: ""; position: absolute; bottom: -1px; left: 21px; width: 8px; height: 4px; border-radius: 2px; background: #7e8796; }
.current::after { left: 15px; width: 20px; background: #0a78d4; }
.weather { margin-left: 444px; width: 205px; display: flex; align-items: center; gap: 8px; }
.weather div, .kbd, .clock { display: flex; flex-direction: column; font-size: 14.5px; line-height: 20px; letter-spacing: -.12px; }
.dim { color: #5b6068; }
.kbd { width: 30px; margin-left: 26px; align-items: center; }
.tray { margin-left: 22px; display: flex; align-items: center; gap: 10px; }
.clock { margin: 0 11px 0 auto; align-items: flex-end; }
.hour { letter-spacing: -.4px; }
```
